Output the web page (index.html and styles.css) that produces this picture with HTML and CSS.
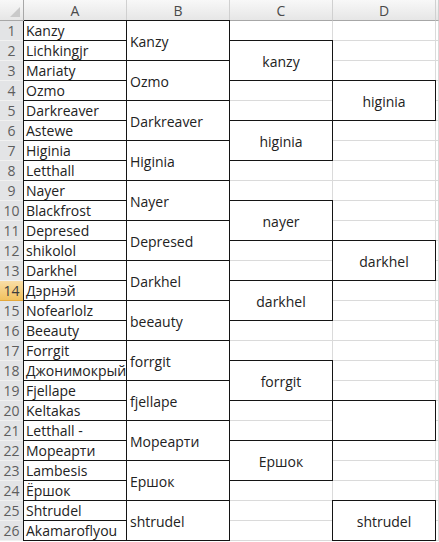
FILE: index.html
```html
<!DOCTYPE html>
<html>
<head>
<meta charset="utf-8">
<link rel="stylesheet" href="styles.css">
</head>
<body>
<div class="sheet">
  <div class="col col-rh">
    <div class="hd corner"><svg class="corner-tri" width="10" height="10" viewBox="0 0 10 10"><polygon points="10,0 10,10 0,10" fill="#c9c9c9"/></svg></div>
    <div class="rh">1</div><div class="rh">2</div><div class="rh">3</div><div class="rh">4</div>
    <div class="rh">5</div><div class="rh">6</div><div class="rh">7</div><div class="rh">8</div>
    <div class="rh">9</div><div class="rh">10</div><div class="rh">11</div><div class="rh">12</div>
    <div class="rh">13</div><div class="rh rh-active">14</div><div class="rh">15</div><div class="rh">16</div>
    <div class="rh">17</div><div class="rh">18</div><div class="rh">19</div><div class="rh">20</div>
    <div class="rh">21</div><div class="rh">22</div><div class="rh">23</div><div class="rh">24</div>
    <div class="rh">25</div><div class="rh">26</div>
  </div>

  <div class="col col-a">
    <div class="hd">A</div>
    <div class="name">Kanzy</div>
    <div class="name">Lichkingjr</div>
    <div class="name">Mariaty</div>
    <div class="name">Ozmo</div>
    <div class="name">Darkreaver</div>
    <div class="name">Astewe</div>
    <div class="name">Higinia</div>
    <div class="name">Letthall</div>
    <div class="name">Nayer</div>
    <div class="name">Blackfrost</div>
    <div class="name">Depresed</div>
    <div class="name">shikolol</div>
    <div class="name">Darkhel</div>
    <div class="name">Дэрнэй</div>
    <div class="name">Nofearlolz</div>
    <div class="name">Beeauty</div>
    <div class="name">Forrgit</div>
    <div class="name">Джонимокрый</div>
    <div class="name">Fjellape</div>
    <div class="name">Keltakas</div>
    <div class="name">Letthall -</div>
    <div class="name">Мореарти</div>
    <div class="name">Lambesis</div>
    <div class="name">Ёршок</div>
    <div class="name">Shtrudel</div>
    <div class="name">Akamaroflyou</div>
  </div>

  <div class="col col-b">
    <div class="hd">B</div>
    <div class="merged">Kanzy</div>
    <div class="merged">Ozmo</div>
    <div class="merged">Darkreaver</div>
    <div class="merged">Higinia</div>
    <div class="merged">Nayer</div>
    <div class="merged">Depresed</div>
    <div class="merged">Darkhel</div>
    <div class="merged">beeauty</div>
    <div class="merged">forrgit</div>
    <div class="merged">fjellape</div>
    <div class="merged">Мореарти</div>
    <div class="merged">Ершок</div>
    <div class="merged">shtrudel</div>
  </div>

  <div class="col col-c">
    <div class="hd">C</div>
    <div class="cell"></div>
    <div class="box">kanzy</div>
    <div class="cell"></div><div class="cell"></div>
    <div class="box">higinia</div>
    <div class="cell"></div><div class="cell"></div>
    <div class="box">nayer</div>
    <div class="cell"></div><div class="cell"></div>
    <div class="box">darkhel</div>
    <div class="cell"></div><div class="cell"></div>
    <div class="box">forrgit</div>
    <div class="cell"></div><div class="cell"></div>
    <div class="box">Ершок</div>
    <div class="cell"></div><div class="cell"></div><div class="cell"></div>
  </div>

  <div class="col col-d">
    <div class="hd">D</div>
    <div class="cell"></div><div class="cell"></div><div class="cell"></div>
    <div class="box">higinia</div>
    <div class="cell"></div><div class="cell"></div><div class="cell"></div>
    <div class="cell"></div><div class="cell"></div><div class="cell"></div>
    <div class="box">darkhel</div>
    <div class="cell"></div><div class="cell"></div><div class="cell"></div>
    <div class="cell"></div><div class="cell"></div><div class="cell"></div>
    <div class="box"></div>
    <div class="cell"></div><div class="cell"></div><div class="cell"></div>
    <div class="box">shtrudel</div>
  </div>

  <div class="col col-e">
    <div class="hd"></div>
    <div class="cell"></div><div class="cell"></div><div class="cell"></div><div class="cell"></div>
    <div class="cell"></div><div class="cell"></div><div class="cell"></div><div class="cell"></div>
    <div class="cell"></div><div class="cell"></div><div class="cell"></div><div class="cell"></div>
    <div class="cell"></div><div class="cell"></div><div class="cell"></div><div class="cell"></div>
    <div class="cell"></div><div class="cell"></div><div class="cell"></div><div class="cell"></div>
    <div class="cell"></div><div class="cell"></div><div class="cell"></div><div class="cell"></div>
    <div class="cell"></div><div class="cell"></div>
  </div>
</div>
</body>
</html>
```

FILE: styles.css
```css
html, body {
  margin: 0;
  padding: 0;
  background: #ffffff;
}

body {
  font-family: "Open Sans", "Noto Sans", sans-serif;
  color: #222222;
}

.sheet {
  display: flex;
  width: 439px;
  height: 542px;
  overflow: hidden;
  background: #ffffff;
}

.col {
  display: flex;
  flex-direction: column;
  flex: none;
}

.col-rh { width: 24px; }
.col-a, .col-b, .col-c, .col-d { width: 103px; }
.col-e { flex: 1 1 auto; }

.col > div { flex: none; box-sizing: border-box; }

.hd {
  height: 21px;
  border-bottom: 1px solid #a7a7a7;
  border-right: 1px solid #d0d0d0;
  background: linear-gradient(#f8f8f8, #e6e6e6);
  display: flex;
  align-items: center;
  justify-content: center;
  font-size: 14px;
  color: #4a4a4a;
}

.corner {
  position: relative;
  border-right-color: #a7a7a7;
}

.corner-tri {
  position: absolute;
  right: 3px;
  bottom: 3px;
}

.rh {
  height: 20px;
  border-bottom: 1px solid #f1f1f1;
  border-right: 1px solid #a7a7a7;
  background: #e3e4e6;
  display: flex;
  align-items: center;
  justify-content: center;
  font-size: 14px;
  color: #5e5e5e;
}

.rh-active {
  background: linear-gradient(#f9dea6, #f1c15e);
  border-bottom-color: #e5a83a;
  color: #3c3c3c;
}

.cell {
  height: 20px;
  border-bottom: 1px solid #dadada;
  border-right: 1px solid #dadada;
}

.name {
  height: 21px;
  margin: -1px 0 0 -1px;
  border: 1px solid #141414;
  padding-left: 2px;
  font-size: 14px;
  line-height: 19px;
  white-space: nowrap;
  overflow: hidden;
  background: #ffffff;
}

.merged,
.box {
  height: 41px;
  margin: -1px 0 0 -1px;
  border: 1px solid #141414;
  background: #ffffff;
  display: flex;
  align-items: center;
  font-size: 14px;
  line-height: 19px;
  white-space: nowrap;
  overflow: hidden;
  padding-top: 2px;
}

.merged {
  padding-left: 3px;
}

.box {
  justify-content: center;
}
```
